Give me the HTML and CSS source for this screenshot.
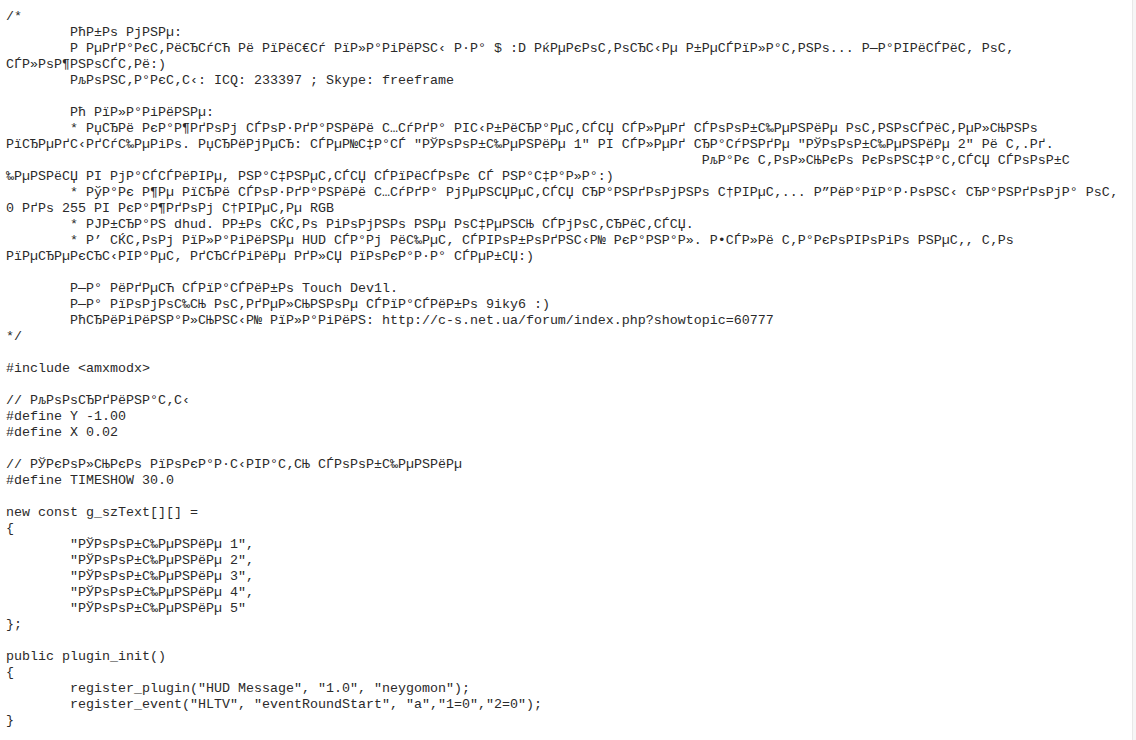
FILE: index.html
```html
<!DOCTYPE html>
<html lang="ru">
<head>
<meta charset="utf-8">
<title>hud_message.sma</title>
<link rel="stylesheet" href="styles.css">
</head>
<body>
<div class="page">
<pre class="code">/*
        РћР±Рѕ РјРЅРµ:
        Р&nbsp;РµРґР°РєС‚РёСЂСѓСЋ Рё РїРёС€Сѓ РїР»Р°РіРёРЅС‹ Р·Р° $ :D РќРµРєРѕС‚РѕСЂС‹Рµ Р±РµСЃРїР»Р°С‚РЅРѕ... Р—Р°РІРёСЃРёС‚ РѕС‚
СЃР»РѕР¶РЅРѕСЃС‚Рё:)
        РљРѕРЅС‚Р°РєС‚С‹: ICQ: 233397 ; Skype: freeframe

        Рћ РїР»Р°РіРёРЅРµ:
        * РџСЂРё РєР°Р¶РґРѕРј СЃРѕР·РґР°РЅРёРё С…СѓРґР° РІС‹Р±РёСЂР°РµС‚СЃСЏ СЃР»РµРґ СЃРѕРѕР±С‰РµРЅРёРµ РѕС‚РЅРѕСЃРёС‚РµР»СЊРЅРѕ
РїСЂРµРґС‹РґСѓС‰РµРіРѕ. РџСЂРёРјРµСЂ: СЃРµР№С‡Р°СЃ "РЎРѕРѕР±С‰РµРЅРёРµ 1" РІ СЃР»РµРґ СЂР°СѓРЅРґРµ "РЎРѕРѕР±С‰РµРЅРёРµ 2" Рё С‚.Рґ.
                                                                                       РљР°Рє С‚РѕР»СЊРєРѕ РєРѕРЅС‡Р°С‚СЃСЏ СЃРѕРѕР±С
‰РµРЅРёСЏ РІ РјР°СЃСЃРёРІРµ, РЅР°С‡РЅРµС‚СЃСЏ СЃРїРёСЃРѕРє СЃ РЅР°С‡Р°Р»Р°:)
        * РўР°Рє Р¶Рµ РїСЂРё СЃРѕР·РґР°РЅРёРё С…СѓРґР° РјРµРЅСЏРµС‚СЃСЏ СЂР°РЅРґРѕРјРЅРѕ С†РІРµС‚... Р”РёР°РїР°Р·РѕРЅС‹ СЂР°РЅРґРѕРјР° РѕС‚
0 РґРѕ 255 РІ РєР°Р¶РґРѕРј С†РІРµС‚Рµ RGB
        * РЈР±СЂР°РЅ dhud. РР±Рѕ СЌС‚Рѕ РіРѕРјРЅРѕ РЅРµ РѕС‡РµРЅСЊ СЃРјРѕС‚СЂРёС‚СЃСЏ.
        * Р’ СЌС‚РѕРј РїР»Р°РіРёРЅРµ HUD СЃР°Рј РёС‰РµС‚ СЃРІРѕР±РѕРґРЅС‹Р№ РєР°РЅР°Р». Р•СЃР»Рё С‚Р°РєРѕРІРѕРіРѕ РЅРµС‚, С‚Рѕ
РїРµСЂРµРєСЂС‹РІР°РµС‚ РґСЂСѓРіРёРµ РґР»СЏ РїРѕРєР°Р·Р° СЃРµР±СЏ:)

        Р—Р° РёРґРµСЋ СЃРїР°СЃРёР±Рѕ Touch Dev1l.
        Р—Р° РїРѕРјРѕС‰СЊ РѕС‚РґРµР»СЊРЅРѕРµ СЃРїР°СЃРёР±Рѕ 9iky6 :)
        РћСЂРёРіРёРЅР°Р»СЊРЅС‹Р№ РїР»Р°РіРёРЅ: http://c-s.net.ua/forum/index.php?showtopic=60777
*/

#include &lt;amxmodx&gt;

// РљРѕРѕСЂРґРёРЅР°С‚С‹
#define Y -1.00
#define X 0.02

// РЎРєРѕР»СЊРєРѕ РїРѕРєР°Р·С‹РІР°С‚СЊ СЃРѕРѕР±С‰РµРЅРёРµ
#define TIMESHOW 30.0

new const g_szText[][] =
{
        "РЎРѕРѕР±С‰РµРЅРёРµ 1",
        "РЎРѕРѕР±С‰РµРЅРёРµ 2",
        "РЎРѕРѕР±С‰РµРЅРёРµ 3",
        "РЎРѕРѕР±С‰РµРЅРёРµ 4",
        "РЎРѕРѕР±С‰РµРЅРёРµ 5"
};

public plugin_init()
{
        register_plugin("HUD Message", "1.0", "neygomon");
        register_event("HLTV", "eventRoundStart", "a","1=0","2=0");
}</pre>
<div class="edge"></div>
</div>
</body>
</html>
```

FILE: styles.css
```css
html, body {
  margin: 0;
  padding: 0;
  background: #ffffff;
}

.page {
  display: flex;
  height: 100vh;
  overflow: hidden;
}

.code {
  flex: 1;
  margin: 0;
  padding: 9px 0 0 6px;
  font-family: "Liberation Mono", "Courier New", monospace;
  font-size: 13.33px;
  line-height: 16px;
  color: #2a2a2a;
  white-space: pre;
  overflow: hidden;
  tab-size: 8;
}

.edge {
  width: 3px;
  flex: none;
  background: #f6f6f6;
  border-left: 1px solid #e8e8e8;
}
```
